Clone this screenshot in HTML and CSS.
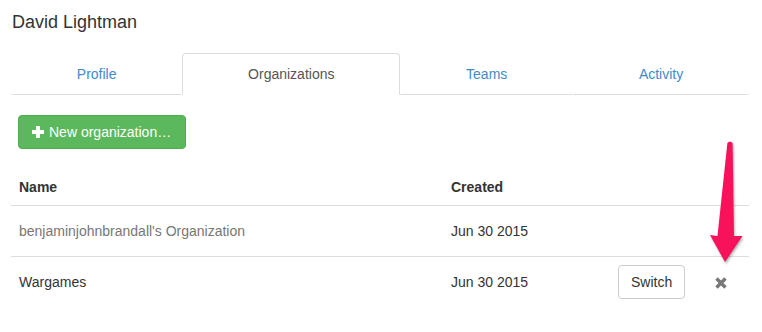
FILE: index.html
```html
<!DOCTYPE html>
<html lang="en">
<head>
    <meta charset="UTF-8">
    <meta name="viewport" content="width=device-width, initial-scale=1.0">
    <title>David Lightman - Organizations</title>
    <link rel="stylesheet" href="styles.css">
</head>
<body>
    <div class="halaman">
        <h1 class="nama">David Lightman</h1>

        <ul class="tab">
            <li><a href="#">Profile</a></li>
            <li class="aktif"><a href="#">Organizations</a></li>
            <li><a href="#">Teams</a></li>
            <li><a href="#">Activity</a></li>
        </ul>

        <button class="tombol-baru">
            <svg class="ikon-plus" width="12" height="12" viewBox="0 0 12 12">
                <path d="M4 0h4v4h4v4H8v4H4V8H0V4h4z" fill="#fff"/>
            </svg>
            New organization…
        </button>

        <table class="daftar">
            <colgroup>
                <col style="width: 432px">
                <col style="width: 168px">
                <col style="width: 82px">
                <col style="width: 56px">
            </colgroup>
            <thead>
                <tr>
                    <th>Name</th>
                    <th>Created</th>
                    <th></th>
                    <th></th>
                </tr>
            </thead>
            <tbody>
                <tr>
                    <td class="redup">benjaminjohnbrandall's Organization</td>
                    <td>Jun 30 2015</td>
                    <td></td>
                    <td></td>
                </tr>
                <tr>
                    <td>Wargames</td>
                    <td>Jun 30 2015</td>
                    <td><button class="tombol-ganti">Switch</button></td>
                    <td class="hapus">
                        <svg width="12" height="12" viewBox="0 0 12 12">
                            <path d="M1.5 1.5L10.5 10.5M10.5 1.5L1.5 10.5" stroke="#777" stroke-width="3.4"/>
                        </svg>
                    </td>
                </tr>
            </tbody>
        </table>

        <!-- panah anotasi -->
        <svg class="panah" width="60" height="140" viewBox="0 0 60 140">
            <path d="M27.4 8 Q30 5 32.6 8 L34 101 L42.5 101 L25 127 L10 100 L17.5 101 Z" fill="#f8125c"/>
        </svg>
    </div>
</body>
</html>
```

FILE: styles.css
```css
body {
    margin: 0;
    font-family: "Liberation Sans", Arial, sans-serif;
    font-size: 14px;
    line-height: 20px;
    color: #333;
    background-color: #fff;
}

.halaman {
    position: relative;
    padding: 10px 13px 0 11px;
}

.nama {
    font-size: 18px;
    font-weight: normal;
    line-height: 24px;
    margin: 0 0 19px 1px;
}

.tab {
    display: flex;
    list-style: none;
    margin: 0;
    padding: 0;
}

.tab li {
    flex: 1 1 auto;
}

.tab a {
    display: block;
    padding: 10px 15px;
    text-align: center;
    color: #428bca;
    text-decoration: none;
    border: 1px solid transparent;
    border-bottom-color: #ddd;
    border-radius: 4px 4px 0 0;
}

.tab .aktif a {
    color: #555;
    border-color: #ddd;
    border-bottom-color: #fff;
}

.tombol-baru {
    display: flex;
    align-items: center;
    gap: 5px;
    margin: 20px 0 0 7px;
    padding: 6px 14px 6px 13px;
    font-family: inherit;
    font-size: 14px;
    line-height: 20px;
    color: #fff;
    background-color: #5cb85c;
    border: 1px solid #4cae4c;
    border-radius: 4px;
    cursor: pointer;
}

.ikon-plus {
    margin-top: -1px;
}

.daftar {
    width: 738px;
    margin-top: 20px;
    border-collapse: collapse;
    table-layout: fixed;
}

.daftar th {
    padding: 8px;
    text-align: left;
    font-weight: bold;
    border-bottom: 1px solid #ddd;
}

.daftar td {
    padding: 8px;
    line-height: 34px;
    vertical-align: middle;
}

.daftar tbody tr + tr td {
    border-top: 1px solid #ddd;
}

.redup {
    color: #777;
}

.tombol-ganti {
    display: block;
    height: 34px;
    margin-left: -1px;
    padding: 6px 12px;
    font-family: inherit;
    font-size: 14px;
    line-height: 20px;
    color: #333;
    background-color: #fff;
    border: 1px solid #ccc;
    border-radius: 4px;
    cursor: pointer;
}

.hapus {
    text-align: center;
}

.hapus svg {
    display: inline-block;
    vertical-align: middle;
}

.panah {
    position: absolute;
    left: 700px;
    top: 135px;
    filter: drop-shadow(1px 2px 1px rgba(0, 0, 0, 0.3));
}
```
